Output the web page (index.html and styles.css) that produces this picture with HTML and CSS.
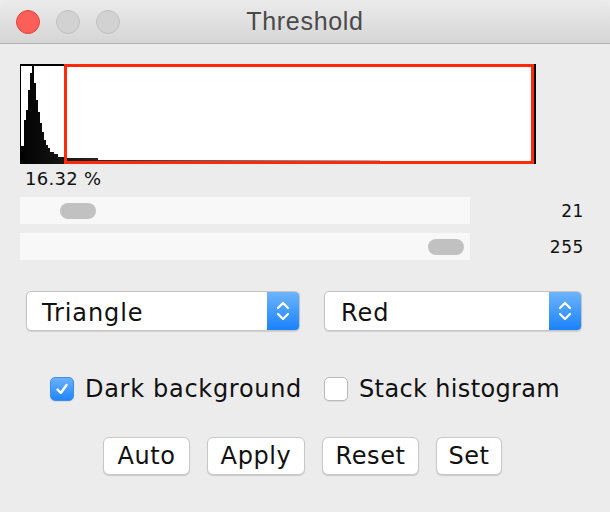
FILE: index.html
```html
<!DOCTYPE html>
<html>
<head>
<meta charset="utf-8">
<link rel="stylesheet" href="styles.css">
</head>
<body>
<div class="window">
  <div class="titlebar">
    <div class="lights">
      <span class="light red"></span>
      <span class="light"></span>
      <span class="light"></span>
    </div>
    <div class="title">Threshold</div>
  </div>
  <div class="content">
    <svg class="histo" width="516" height="100" viewBox="0 0 516 100">
      <defs>
        <linearGradient id="lut" x1="0" y1="0" x2="512" y2="0" gradientUnits="userSpaceOnUse">
          <stop offset="0" stop-color="#000"/>
          <stop offset="0.1" stop-color="#1a1a1a"/>
          <stop offset="1" stop-color="#fff"/>
        </linearGradient>
      </defs>
      <rect x="0" y="0" width="516" height="100" fill="#fff"/>
      <polygon fill="url(#lut)" points="1,100 1,82 4,82 4,56 6,56 6,46 8,46 8,26 10,26 10,9 12,9 12,1 14,1 14,19 16,19 16,36 18,36 18,48 20,48 20,59 22,59 22,68 24,68 24,76 26,76 26,81 28,81 28,84 30,84 30,88 34,88 34,90 38,90 38,93 44,93 44,94 78,94 78,96 360,96 360,97 450,97 450,100"/>
      <rect x="0" y="0" width="1" height="100" fill="#000"/>
      <rect x="0" y="0" width="46" height="2" fill="#000"/>
      <rect x="514" y="0" width="2" height="100" fill="#000"/>
      <rect x="45.5" y="1.5" width="467" height="97" fill="none" stroke="#ff2a0a" stroke-width="3"/>
    </svg>
    <div class="percent">16.32 %</div>
    <div class="sliders">
      <div class="srow">
        <div class="track"><span class="thumb t1"></span></div>
        <span class="val">21</span>
      </div>
      <div class="srow">
        <div class="track end"><span class="thumb"></span></div>
        <span class="val">255</span>
      </div>
    </div>
    <div class="selects">
      <div class="select s1">
        <span class="stext">Triangle</span>
        <span class="arrow"><svg width="14" height="22" viewBox="0 0 14 22"><path d="M2 8 L7 3 L12 8 M2 14 L7 19 L12 14" fill="none" stroke="#fff" stroke-width="2.2" stroke-linecap="round" stroke-linejoin="round"/></svg></span>
      </div>
      <div class="select s2">
        <span class="stext">Red</span>
        <span class="arrow"><svg width="14" height="22" viewBox="0 0 14 22"><path d="M2 8 L7 3 L12 8 M2 14 L7 19 L12 14" fill="none" stroke="#fff" stroke-width="2.2" stroke-linecap="round" stroke-linejoin="round"/></svg></span>
      </div>
    </div>
    <div class="checks">
      <label class="check c1"><span class="box on"><svg width="16" height="16" viewBox="0 0 16 16"><path d="M3.5 8.5 L6.8 12 L12.5 4" fill="none" stroke="#fff" stroke-width="2.4" stroke-linecap="round" stroke-linejoin="round"/></svg></span>Dark background</label>
      <label class="check c2"><span class="box"></span>Stack histogram</label>
    </div>
    <div class="buttons">
      <button class="btn b-auto">Auto</button>
      <button class="btn b-apply">Apply</button>
      <button class="btn b-reset">Reset</button>
      <button class="btn b-set">Set</button>
    </div>
  </div>
</div>
</body>
</html>
```

FILE: styles.css
```css
* { box-sizing: border-box; }
html, body { margin: 0; padding: 0; }
body {
  width: 610px;
  height: 512px;
  background: #ececec;
  font-family: "DejaVu Sans", "Open Sans", sans-serif;
  color: #111;
  overflow: hidden;
}
.window {
  width: 610px;
  height: 512px;
  background: #ececec;
  border-radius: 8px 8px 0 0;
  overflow: hidden;
}
.titlebar {
  height: 44px;
  background: linear-gradient(#ebebeb, #d6d6d6);
  border-bottom: 1px solid #b3b3b3;
  display: flex;
  align-items: center;
  position: relative;
}
.lights {
  display: flex;
  gap: 16px;
  padding-left: 16px;
}
.light {
  width: 24px;
  height: 24px;
  border-radius: 50%;
  background: #d2d2d2;
  border: 1px solid #c0c0c0;
}
.light.red {
  background: #fc5f57;
  border-color: #e1463f;
}
.title {
  position: absolute;
  left: 0;
  right: 0;
  top: 7px;
  text-align: center;
  font-family: "Liberation Sans", Arial, sans-serif;
  font-size: 25px;
  letter-spacing: 0.7px;
  color: #4a4a4a;
  pointer-events: none;
}
.content {
  padding: 20px 0 0 20px;
}
.histo {
  display: block;
}
.percent {
  font-size: 18px;
  line-height: 20px;
  margin: 5px 0 0 5px;
  letter-spacing: 0.3px;
}
.sliders {
  margin-top: 8px;
  display: flex;
  flex-direction: column;
  gap: 9px;
  width: 564px;
}
.srow {
  display: flex;
  align-items: center;
  justify-content: space-between;
}
.track {
  width: 450px;
  height: 27px;
  background: #f8f8f8;
  display: flex;
  align-items: center;
  padding-left: 40px;
}
.track.end {
  padding-left: 408px;
}
.thumb {
  width: 36px;
  height: 16px;
  border-radius: 8px;
  background: #c1c1c1;
}
.val {
  font-size: 17px;
  letter-spacing: 0.6px;
}
.selects {
  margin: 31px 0 0 6px;
  display: flex;
  gap: 24px;
}
.select {
  height: 40px;
  background: #fff;
  border: 1px solid #c4c4c4;
  border-radius: 5px;
  box-shadow: 0 1px 1px rgba(0, 0, 0, 0.12);
  display: flex;
  align-items: center;
  justify-content: space-between;
  overflow: hidden;
}
.s1 { width: 274px; }
.s2 { width: 258px; }
.stext {
  font-size: 24px;
  letter-spacing: 0.9px;
  padding: 3px 0 0 15px;
}
.s2 .stext { padding-left: 16px; }
.arrow {
  width: 32px;
  height: 100%;
  background: linear-gradient(#6db4fb, #1a82fb);
  display: flex;
  align-items: center;
  justify-content: center;
}
.checks {
  margin: 44px 0 0 30px;
  display: flex;
  align-items: center;
}
.check {
  display: flex;
  align-items: center;
  font-size: 24px;
  letter-spacing: 0.7px;
  gap: 11px;
}
.c1 { margin-right: 22px; }
.c2 { letter-spacing: 0.35px; }
.box {
  width: 24px;
  height: 24px;
  border-radius: 5px;
  background: #fff;
  border: 1px solid #b9b9b9;
  box-shadow: 0 1px 1px rgba(0,0,0,0.08);
  display: flex;
  align-items: center;
  justify-content: center;
}
.box.on {
  background: linear-gradient(#69b1fb, #2186fb);
  border-color: #3b8fe8;
}
.buttons {
  margin: 34px 0 0 83px;
  display: flex;
  gap: 17px;
}
.btn {
  height: 38px;
  background: #fff;
  border: 1px solid #c8c8c8;
  border-radius: 6px;
  box-shadow: 0 1px 1px rgba(0,0,0,0.15);
  font-family: "DejaVu Sans", sans-serif;
  font-size: 24px;
  letter-spacing: 0.6px;
  color: #111;
  padding: 0;
}
.b-auto { width: 87px; }
.b-apply { width: 98px; }
.b-reset { width: 97px; }
.b-set { width: 66px; }
```
